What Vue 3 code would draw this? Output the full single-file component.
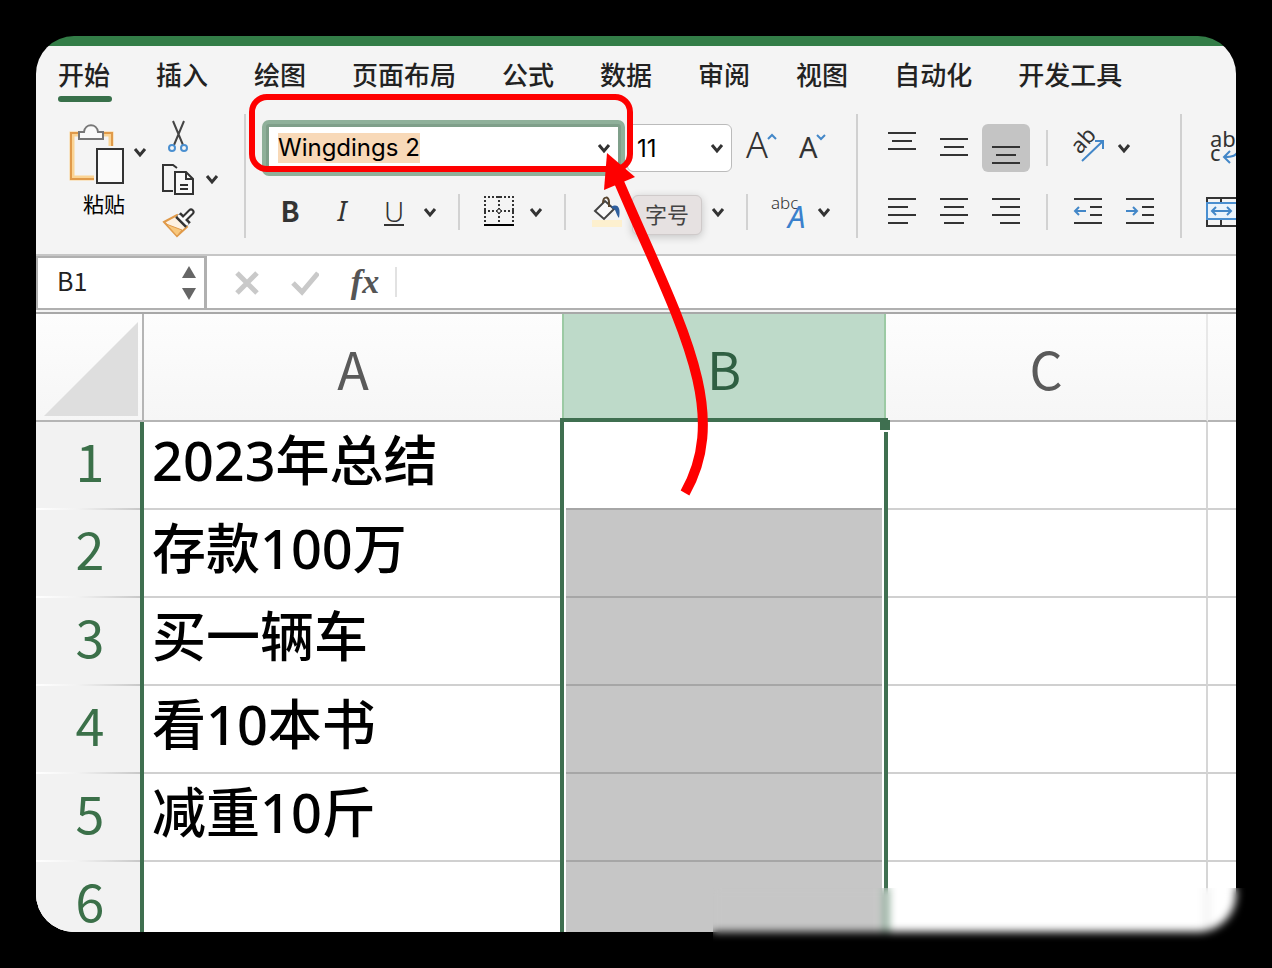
<template>
  <div class="stage">
    <svg class="defs" aria-hidden="true">
      <symbol id="chevron" viewBox="-10 -10 20 20">
        <path d="M-5 -3L0 3L5 -3" fill="none" stroke="#333" stroke-width="3" />
      </symbol>
    </svg>

    <main class="window">
      <!-- 选项卡 -->
      <nav class="tabs">
        <a
          v-for="tab in tabs"
          :key="tab"
          href="#"
          class="tab"
          :class="{ active: tab === activeTab }"
          @click.prevent="activeTab = tab"
        >{{ tab }}</a>
      </nav>

      <!-- 功能区 -->
      <div class="ribbon">
        <div class="group clipboard">
          <button class="paste">
            <svg width="56" height="60" fill="none">
              <path d="M42 22V10H3V54H25" stroke="#fbd494" stroke-width="5" />
              <path d="M43 22V9H2V55H25" stroke="#e09a4a" stroke-width="2" />
              <path d="M10 8H15C16 -1 28 -1 29 8H34V15H10Z" fill="#fafafa" stroke="#777" stroke-width="2" />
              <rect x="28" y="25" width="26" height="34" fill="#fafafa" stroke="#333" stroke-width="2" />
            </svg>
            <span>粘贴</span>
          </button>
          <button class="chev paste-chev" aria-label="粘贴选项"><svg><use href="#chevron" /></svg></button>
          <div class="clip-tools">
            <button aria-label="剪切">
              <svg width="34" height="32" fill="none">
                <path d="M11 1L21 25M22 1L12 25" stroke="#444" stroke-width="2" />
                <circle cx="10" cy="28" r="3" stroke="#4a8fd0" stroke-width="2" />
                <circle cx="22" cy="28" r="3" stroke="#4a8fd0" stroke-width="2" />
              </svg>
            </button>
            <div class="copy">
              <button aria-label="复制">
                <svg width="34" height="32" fill="none" stroke="#333" stroke-width="2">
                  <path d="M11 28H1V2H11L15 5" />
                  <path d="M13 9H24L31 16V31H13Z" fill="#fafafa" />
                  <path d="M24 9V16H31M18 22H26M18 26H26" />
                </svg>
              </button>
              <button class="chev" aria-label="复制选项"><svg><use href="#chevron" /></svg></button>
            </div>
            <button aria-label="格式刷">
              <svg width="34" height="32" fill="none">
                <path d="M2 16L15 9L25 21L15 30Z" fill="#fdf1e2" stroke="#e09a4a" stroke-width="2" />
                <path d="M4 18L20 24L15 30Z" fill="#f8c77c" stroke="#e09a4a" />
                <path d="M22 13L29 6" stroke="#333" stroke-width="7" stroke-linecap="round" />
                <path d="M16 9L26 19" stroke="#333" stroke-width="8" />
                <path d="M17 10L25 18M22 13L29 6" stroke="#fafafa" stroke-width="3" stroke-linecap="round" />
              </svg>
            </button>
          </div>
        </div>

        <div class="group font">
          <div class="row first">
            <div class="font-field">
              <input ref="fontInput" v-model="fontName" aria-label="字体" spellcheck="false" />
              <button class="chev" aria-label="字体列表"><svg><use href="#chevron" /></svg></button>
            </div>
            <div class="size-field">
              <select v-model="fontSize" aria-label="字号">
                <option v-for="s in [9, 10, 11, 12, 14]" :key="s" :value="s">{{ s }}</option>
              </select>
              <svg class="size-chev"><use href="#chevron" /></svg>
            </div>
            <button class="tool" aria-label="增大字号">
              <svg viewBox="-20 -20 40 40">
                <text x="-14" y="10" font-size="36" class="light">A</text>
                <path d="M8 -9L12 -13L16 -9" class="blue" />
              </svg>
            </button>
            <button class="tool" aria-label="减小字号">
              <svg viewBox="-20 -20 40 40">
                <text x="-13" y="10" font-size="29" class="small-a">A</text>
                <path d="M5 -13L9 -9L13 -13" class="blue" />
              </svg>
            </button>
          </div>
          <div class="row">
            <button class="tool bold">B</button>
            <button class="tool italic">I</button>
            <button class="tool underline"><span>U</span></button>
            <button class="chev after" aria-label="下划线选项"><svg><use href="#chevron" /></svg></button>
            <i class="divider"></i>
            <button class="tool" aria-label="边框">
              <svg viewBox="-20 -20 40 40" fill="none" stroke="#333" stroke-width="2">
                <path d="M-16 -15H14M-16 -1H14M-15 -16V12M-1 -16V12M13 -16V12" stroke-dasharray="2 2" />
                <circle cx="-1" cy="-1" r="2" fill="#f4f4f4" stroke-width="1" />
                <path d="M-16 13H14" stroke="#000" />
              </svg>
            </button>
            <button class="chev after" aria-label="边框选项"><svg><use href="#chevron" /></svg></button>
            <i class="divider"></i>
            <button class="tool" aria-label="填充颜色">
              <svg viewBox="-20 -20 40 40" fill="none">
                <rect x="-14" y="8" width="30" height="7" fill="#fdf0cf" />
                <path d="M-11 -1L-1 -11L8 -3L-2 7Z" fill="#fafafa" stroke="#444" stroke-width="2" />
                <path d="M-3 -9C-3 -16 3 -16 3 -10V-5" stroke="#5a4630" stroke-width="2" />
                <path d="M5 -5C12 -9 15 -4 13 6C11 4 10 0 9 -2Z" fill="#2f5f9e" />
              </svg>
            </button>
            <div class="tip-slot"><span class="tip" role="tooltip">字号</span></div>
            <button class="chev after" aria-label="字体颜色"><svg><use href="#chevron" /></svg></button>
            <i class="divider"></i>
            <button class="tool" aria-label="拼音">
              <svg viewBox="-20 -20 40 40">
                <text x="-17" y="-3" font-size="17" class="light">abc</text>
                <text x="0" y="16" font-size="31" class="blue-a">A</text>
              </svg>
            </button>
            <button class="chev" aria-label="拼音选项"><svg><use href="#chevron" /></svg></button>
          </div>
        </div>

        <div class="group align">
          <div class="row">
            <button
              v-for="v in vertical"
              :key="v.name"
              class="tool"
              :class="{ pressed: v.name === '底端对齐' }"
              :aria-label="v.name"
            >
              <svg viewBox="-20 -20 40 40"><path :d="v.d" class="line" /></svg>
            </button>
            <i class="divider"></i>
            <button class="tool" aria-label="方向">
              <svg viewBox="-20 -20 40 40">
                <text x="-8" y="7" font-size="22" class="ink" transform="rotate(-48 -8 7)">ab</text>
                <path d="M-6 13L15 -7M7 -7H15V1" class="blue" />
              </svg>
            </button>
            <button class="chev" aria-label="方向选项"><svg><use href="#chevron" /></svg></button>
          </div>
          <div class="row">
            <button v-for="h in horizontal" :key="h.name" class="tool" :aria-label="h.name">
              <svg viewBox="-20 -20 40 40"><path :d="h.d" class="line" /></svg>
            </button>
            <i class="divider"></i>
            <button class="tool" aria-label="减少缩进量">
              <svg viewBox="-20 -20 40 40">
                <path d="M-14 -13H14M2 -5H14M2 3H14M-14 11H14" class="line" />
                <path d="M-2 -1H-13M-9 -5L-13 -1L-9 3" class="blue" />
              </svg>
            </button>
            <button class="tool" aria-label="增加缩进量">
              <svg viewBox="-20 -20 40 40">
                <path d="M-14 -13H14M2 -5H14M2 3H14M-14 11H14" class="line" />
                <path d="M-14 -1H-3M-7 -5L-3 -1L-7 3" class="blue" />
              </svg>
            </button>
          </div>
        </div>

        <div class="group cells">
          <div class="row">
            <button class="tool" aria-label="自动换行">
              <svg viewBox="-20 -20 40 40">
                <text x="-12" y="-1" font-size="22" class="ink">ab</text>
                <text x="-12" y="13" font-size="22" class="ink">c</text>
                <path d="M16 2C15 8 10 9 2 9M8 3L2 9L8 15" class="blue" />
              </svg>
            </button>
          </div>
          <div class="row">
            <button class="tool" aria-label="合并后居中">
              <svg viewBox="-20 -20 40 40">
                <path d="M-15 -14H15V14H-15ZM-1 -14V-9M-1 7V14" class="line" />
                <rect x="-15" y="-9" width="30" height="16" fill="#eaf3fb" stroke="#4a8fd0" stroke-width="2" />
                <path d="M-10 -1H9M-6 -5L-10 -1L-6 3M5 -5L9 -1L5 3" class="blue" />
              </svg>
            </button>
          </div>
        </div>
      </div>

      <!-- 编辑栏 -->
      <div class="formula-bar">
        <div class="name-box">
          <input v-model="cellName" aria-label="名称框" />
          <svg width="14" height="34" fill="#666">
            <path d="M7 0L14 12H0Z" />
            <path d="M0 22H14L7 34Z" />
          </svg>
        </div>
        <button aria-label="取消">
          <svg width="28" height="28"><path d="M4 5L24 25M24 5L4 25" class="muted" /></svg>
        </button>
        <button aria-label="输入">
          <svg width="28" height="28"><path d="M2 15L11 24L27 5" class="muted" /></svg>
        </button>
        <button class="fx" aria-label="插入函数">fx</button>
        <input class="formula" aria-label="编辑栏" />
      </div>

      <!-- 工作表 -->
      <div class="sheet">
        <table>
          <colgroup>
            <col class="col-index" />
            <col class="col-a" />
            <col class="col-b" />
            <col class="col-c" />
            <col />
          </colgroup>
          <thead>
            <tr>
              <th class="corner"><svg width="94" height="94"><path d="M94 0V94H0Z" fill="#dedede" /></svg></th>
              <th scope="col">A</th>
              <th scope="col" class="selected">B</th>
              <th scope="col" class="col-end">C</th>
              <th></th>
            </tr>
          </thead>
          <tbody>
            <tr v-for="(text, idx) in rows" :key="idx">
              <th scope="row">{{ idx + 1 }}</th>
              <td>{{ text }}</td>
              <td class="picked"></td>
              <td class="col-end"></td>
              <td></td>
            </tr>
          </tbody>
        </table>
        <div class="selection"><i class="handle"></i></div>
      </div>
    </main>

    <!-- 右下角模糊遮挡 -->
    <div class="smudge"></div>

    <!-- 红框与箭头标注 -->
    <svg class="marks" width="720" height="520" fill="none">
      <rect x="252" y="97" width="378" height="72" rx="15" stroke="#fe0000" stroke-width="6" />
      <path d="M685 493C732 410 678 320 619 182" stroke="#fe0000" stroke-width="10" />
      <path d="M607 153L635 177L604 190Z" fill="#fe0000" />
    </svg>
  </div>
</template>

<script setup>
import { onMounted, ref } from 'vue'

const tabs = ['开始', '插入', '绘图', '页面布局', '公式', '数据', '审阅', '视图', '自动化', '开发工具']
const activeTab = ref('开始')

const fontName = ref('Wingdings 2')
const fontSize = ref(11)
const cellName = ref('B1')
const fontInput = ref(null)

const vertical = [
  { name: '顶端对齐', d: 'M-14 -15H14M-10 -7H10M-14 1H14' },
  { name: '垂直居中', d: 'M-14 -9H14M-10 -1H10M-14 7H14' },
  { name: '底端对齐', d: 'M-14 -1H14M-10 7H10M-14 15H14' },
]

const horizontal = [
  { name: '左对齐', d: 'M-14 -13H14M-14 -5H6M-14 3H14M-14 11H6' },
  { name: '居中', d: 'M-14 -13H14M-10 -5H10M-14 3H14M-10 11H10' },
  { name: '右对齐', d: 'M-14 -13H14M-6 -5H14M-14 3H14M-6 11H14' },
]

const rows = ['2023年总结', '存款100万', '买一辆车', '看10本书', '减重10斤', '']

// 进入页面时选中字体名
onMounted(() => {
  fontInput.value.focus()
  fontInput.value.select()
})
</script>

<style>
body {
  margin: 0;
  background: #000;
}
</style>

<style scoped>
.stage {
  position: relative;
  box-sizing: border-box;
  height: 100vh;
  padding: 36px;
  overflow: hidden;
  font-family: "Noto Sans", "Noto Sans CJK SC", sans-serif;
  color: #222;
}

.defs {
  position: absolute;
  width: 0;
  height: 0;
}

.window {
  height: 100%;
  box-sizing: border-box;
  padding-top: 10px;
  border-radius: 38px;
  overflow: hidden;
  background: linear-gradient(#337d47 10px, #f4f4f4 10px);
}

button,
input,
select {
  margin: 0;
  padding: 0;
  border: none;
  outline: none;
  background: none;
  font-family: inherit;
  color: inherit;
}

svg {
  display: block;
}

.tabs {
  display: flex;
  gap: 46px;
  height: 56px;
  padding: 0 22px;
}

.tab {
  position: relative;
  flex: none;
  height: 56px;
  font-family: "Noto Sans CJK SC", sans-serif;
  font-size: 26px;
  font-weight: 500;
  line-height: 56px;
  color: #222;
  text-decoration: none;
}

.tab.active::after {
  content: '';
  position: absolute;
  left: 0;
  right: -2px;
  bottom: 0;
  height: 6px;
  border-radius: 3px;
  background: #38704a;
}

.ribbon {
  display: flex;
  padding: 12px 0 16px;
  overflow: hidden;
  border-bottom: 2px solid #c6c6c6;
}

.group {
  flex: none;
  box-sizing: border-box;
  padding: 10px 0 2px 18px;
}

.group + .group {
  border-left: 2px solid #d0d0d0;
}

.row {
  display: flex;
  align-items: center;
  height: 48px;
}

.row + .row {
  margin-top: 16px;
}

.clipboard {
  display: flex;
  align-items: flex-start;
  padding: 0 22px 0 33px;
}

.paste {
  display: flex;
  flex-direction: column;
  align-items: flex-end;
  gap: 8px;
  margin-top: 10px;
  font-size: 21px;
  line-height: 24px;
  color: #000;
}

.chev,
.chev svg {
  flex: none;
  width: 20px;
  height: 20px;
}

.chev.after {
  margin-right: 4px;
}

.paste-chev {
  margin: 28px 12px 0 5px;
}

.clip-tools {
  display: flex;
  flex-direction: column;
  align-items: flex-start;
  gap: 11px;
  margin-top: 6px;
}

.copy {
  display: flex;
  align-items: center;
  gap: 6px;
}

.font {
  padding-right: 18px;
}

.first {
  padding-left: 2px;
}

.font-field {
  display: flex;
  align-items: center;
  box-sizing: border-box;
  width: 355px;
  height: 48px;
  margin-right: 6px;
  padding: 0 4px 0 9px;
  border: 3px solid #7f9f8a;
  border-radius: 3px;
  box-shadow: 0 0 0 4px #8fb09a;
  background: #fff;
}

.font-field input {
  flex: 1;
  min-width: 0;
  height: 30px;
  font-family: Inter, sans-serif;
  font-size: 24px;
  line-height: 30px;
  color: #000;
}

.font-field input::selection {
  background: #f8d9b8;
  color: #000;
}

.size-field {
  display: grid;
  align-items: center;
  box-sizing: border-box;
  width: 105px;
  height: 48px;
  margin-right: 2px;
  border: 1px solid #bbb;
  border-radius: 6px;
  background: #fff;
}

.size-field select {
  grid-area: 1 / 1;
  height: 46px;
  padding-left: 9px;
  appearance: none;
  font-family: Inter, sans-serif;
  font-size: 24px;
  color: #000;
}

.size-chev {
  grid-area: 1 / 1;
  justify-self: end;
  width: 20px;
  height: 20px;
  margin-right: 4px;
  pointer-events: none;
}

.tool {
  display: flex;
  flex: none;
  align-items: center;
  justify-content: center;
  width: 52px;
  height: 48px;
  font-size: 28px;
  line-height: 32px;
  color: #333;
}

.tool svg {
  width: 40px;
  height: 40px;
  overflow: visible;
}

.tool.pressed {
  width: 48px;
  margin: 0 2px;
  border-radius: 6px;
  background: #c4c4c4;
}

.bold {
  padding-bottom: 4px;
  font-family: "Noto Sans CJK SC", sans-serif;
  font-weight: 700;
}

.italic {
  padding-bottom: 4px;
  font-style: italic;
}

.underline {
  font-weight: 300;
}

.underline span {
  line-height: 26px;
  border-bottom: 2px solid #333;
}

.divider {
  flex: none;
  width: 2px;
  height: 36px;
  margin: 0 14px;
  background: #d2d2d2;
}

.light {
  font-weight: 300;
  fill: #333;
}

.small-a,
.ink {
  fill: #333;
}

.blue-a {
  font-style: italic;
  fill: #3a80cc;
}

.blue {
  fill: none;
  stroke: #4387c8;
  stroke-width: 2;
}

.line {
  fill: none;
  stroke: #333;
  stroke-width: 2;
}

.tip-slot {
  position: relative;
  flex: none;
  width: 76px;
  height: 48px;
}

.tip {
  position: absolute;
  top: 7px;
  left: 0;
  box-sizing: border-box;
  width: 70px;
  height: 40px;
  border: 1px solid #cfcaca;
  border-radius: 6px;
  background: #e6e1e1;
  box-shadow: 0 2px 8px rgba(0, 0, 0, 0.2);
  font-size: 22px;
  line-height: 36px;
  text-align: center;
  color: #444;
}

.align {
  padding-right: 14px;
}

.cells {
  padding-left: 14px;
}

.formula-bar {
  display: flex;
  align-items: center;
  height: 52px;
  background: #fff;
  border-bottom: 2px solid #b0b0b0;
}

.name-box {
  display: flex;
  align-items: center;
  justify-content: space-between;
  box-sizing: border-box;
  width: 171px;
  height: 52px;
  margin-right: 26px;
  padding: 0 8px 0 19px;
  border: 2px solid #b0b0b0;
  border-right-width: 3px;
  border-bottom: none;
}

.name-box input {
  width: 100px;
  padding-bottom: 6px;
  font-family: "Noto Sans CJK SC", sans-serif;
  font-size: 25px;
  color: #222;
}

.formula-bar button {
  flex: none;
  margin-right: 30px;
}

.muted {
  fill: none;
  stroke: #c9c9c9;
  stroke-width: 5;
}

.formula-bar .fx {
  width: 32px;
  margin-right: 14px;
  font-family: "Liberation Serif", serif;
  font-size: 34px;
  font-style: italic;
  font-weight: 700;
  line-height: 40px;
  color: #555;
}

.formula {
  flex: 1;
  height: 30px;
  padding-left: 14px;
  border-left: 2px solid #e2e2e2;
}

.sheet {
  position: relative;
  margin-top: 2px;
  border-top: 2px solid #a8a8a8;
  background: #fff;
}

table {
  width: 100%;
  table-layout: fixed;
  border-collapse: separate;
  border-spacing: 0;
}

.col-index {
  width: 108px;
}

.col-a {
  width: 418px;
}

.col-b {
  width: 324px;
}

.col-c {
  width: 322px;
}

th,
td {
  box-sizing: border-box;
  padding: 0;
  overflow: hidden;
  white-space: nowrap;
}

th {
  font-family: "Noto Sans CJK SC", sans-serif;
  font-size: 52px;
  font-weight: 400;
  line-height: 60px;
}

thead th {
  height: 108px;
  padding-top: 2px;
  border-bottom: 2px solid #b5b5b5;
  background: linear-gradient(#fdfdfd, #f6f6f6);
  color: #5a5a5a;
}

thead .corner {
  padding: 4px 4px 0 8px;
  border-right: 2px solid #b5b5b5;
}

thead .selected {
  border-left: 2px solid #9ccaa4;
  border-right: 2px solid #9ccaa4;
  background: #bedac9;
  color: #2f5f42;
}

tbody th {
  height: 88px;
  padding: 0 0 12px 4px;
  border-right: 4px solid #3f6f50;
  background: linear-gradient(90deg, #fff, #f2f2f2 40%, #c8c8c8) bottom / 100% 2px no-repeat #f2f2f2;
  color: #3b7049;
}

tbody td {
  height: 88px;
  padding: 0 0 10px 8px;
  border-bottom: 2px solid #d0d0d0;
  font-size: 54px;
  font-weight: 500;
  line-height: 70px;
  color: #000;
}

.col-end {
  border-right: 2px solid #d6d6d6;
}

thead .col-end {
  border-right-color: #e8e8e8;
}

tbody .picked {
  border-bottom-color: #a6a6a6;
  background: #c6c6c6;
}

tbody tr:first-child .picked {
  background: #fff;
}

.selection {
  position: absolute;
  top: 104px;
  bottom: -4px;
  left: 524px;
  box-sizing: border-box;
  width: 328px;
  border: 4px solid #3f6f50;
  box-shadow: inset 0 0 0 2px #fff;
  pointer-events: none;
}

.handle {
  position: absolute;
  top: -2px;
  right: -6px;
  width: 10px;
  height: 10px;
  border-bottom: 2px solid #fff;
  background: #3f6f50;
}

.smudge {
  position: absolute;
  right: 0;
  bottom: 0;
  left: 713px;
  height: 80px;
  backdrop-filter: blur(4px);
}

.marks {
  position: absolute;
  top: 0;
  left: 0;
  pointer-events: none;
}
</style>
